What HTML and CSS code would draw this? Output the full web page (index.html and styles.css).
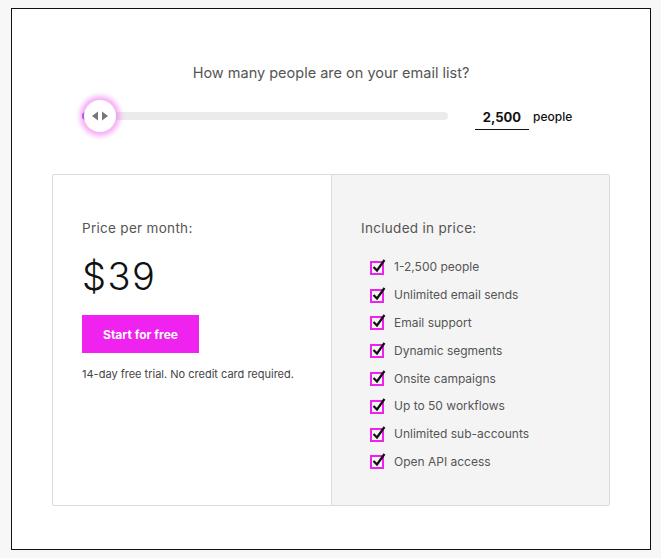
FILE: index.html
```html
<!DOCTYPE html>
<html lang="en">
<head>
    <meta charset="UTF-8">
    <title>Pricing</title>
    <link rel="stylesheet" href="styles.css">
</head>
<body>
    <div class="frame">
        <div class="question">How many people are on your email list?</div>
        <div class="slider-row">
            <div class="track">
                <div class="track-fill"></div>
                <div class="thumb">
                    <svg width="18" height="12" viewBox="0 0 18 12">
                        <path d="M1 6 L7 1.5 L7 10.5 Z" fill="#777"/>
                        <path d="M17 6 L11 1.5 L11 10.5 Z" fill="#777"/>
                    </svg>
                </div>
            </div>
            <div class="count">
                <span class="count-value">2,500</span>
                <span class="count-unit">people</span>
            </div>
        </div>

        <div class="card">
            <div class="price-side">
                <div class="label">Price per month:</div>
                <div class="price">$39</div>
                <button class="start-btn">Start for free</button>
                <div class="trial">14-day free trial. No credit card required.</div>
            </div>
            <div class="features-side">
                <div class="label">Included in price:</div>
                <ul class="features">
                    <li><svg class="check" viewBox="0 0 16 16"><rect x="1" y="3" width="12" height="12" fill="none" stroke="#ee22ee" stroke-width="2"/><path d="M3.5 8 L7 11.5 L14.5 1" fill="none" stroke="#111" stroke-width="2.2"/></svg>1-2,500 people</li>
                    <li><svg class="check" viewBox="0 0 16 16"><rect x="1" y="3" width="12" height="12" fill="none" stroke="#ee22ee" stroke-width="2"/><path d="M3.5 8 L7 11.5 L14.5 1" fill="none" stroke="#111" stroke-width="2.2"/></svg>Unlimited email sends</li>
                    <li><svg class="check" viewBox="0 0 16 16"><rect x="1" y="3" width="12" height="12" fill="none" stroke="#ee22ee" stroke-width="2"/><path d="M3.5 8 L7 11.5 L14.5 1" fill="none" stroke="#111" stroke-width="2.2"/></svg>Email support</li>
                    <li><svg class="check" viewBox="0 0 16 16"><rect x="1" y="3" width="12" height="12" fill="none" stroke="#ee22ee" stroke-width="2"/><path d="M3.5 8 L7 11.5 L14.5 1" fill="none" stroke="#111" stroke-width="2.2"/></svg>Dynamic segments</li>
                    <li><svg class="check" viewBox="0 0 16 16"><rect x="1" y="3" width="12" height="12" fill="none" stroke="#ee22ee" stroke-width="2"/><path d="M3.5 8 L7 11.5 L14.5 1" fill="none" stroke="#111" stroke-width="2.2"/></svg>Onsite campaigns</li>
                    <li><svg class="check" viewBox="0 0 16 16"><rect x="1" y="3" width="12" height="12" fill="none" stroke="#ee22ee" stroke-width="2"/><path d="M3.5 8 L7 11.5 L14.5 1" fill="none" stroke="#111" stroke-width="2.2"/></svg>Up to 50 workflows</li>
                    <li><svg class="check" viewBox="0 0 16 16"><rect x="1" y="3" width="12" height="12" fill="none" stroke="#ee22ee" stroke-width="2"/><path d="M3.5 8 L7 11.5 L14.5 1" fill="none" stroke="#111" stroke-width="2.2"/></svg>Unlimited sub-accounts</li>
                    <li><svg class="check" viewBox="0 0 16 16"><rect x="1" y="3" width="12" height="12" fill="none" stroke="#ee22ee" stroke-width="2"/><path d="M3.5 8 L7 11.5 L14.5 1" fill="none" stroke="#111" stroke-width="2.2"/></svg>Open API access</li>
                </ul>
            </div>
        </div>
    </div>
</body>
</html>
```

FILE: styles.css
```css
* {
    margin: 0;
    padding: 0;
    box-sizing: border-box;
}

body {
    background: #f7f7f7;
    font-family: "Inter", "Liberation Sans", sans-serif;
    color: #555;
}

.frame {
    margin: 8px 0 0 11px;
    width: 640px;
    height: 542px;
    background: #fff;
    border: 1px solid #111;
    padding: 55px 40px 0 40px;
}

.question {
    text-align: center;
    font-size: 14.5px;
    color: #555;
}

.slider-row {
    display: flex;
    align-items: center;
    margin-top: 21px;
    padding-left: 30px;
}

.track {
    position: relative;
    width: 366px;
    height: 8px;
    border-radius: 4px;
    background: #ebebeb;
}

.track-fill {
    width: 10px;
    height: 100%;
    border-radius: 4px 0 0 4px;
    background: #8a4fe0;
}

.thumb {
    position: absolute;
    left: 2px;
    top: -12px;
    width: 32px;
    height: 32px;
    border-radius: 50%;
    background: #fff;
    box-shadow: 0 0 5px 4px rgba(240, 90, 240, 0.5);
    display: flex;
    align-items: center;
    justify-content: center;
}

.count {
    display: flex;
    align-items: center;
    margin-left: 27px;
    gap: 4px;
}

.count-value {
    display: inline-block;
    width: 54px;
    text-align: center;
    font-size: 13px;
    font-weight: 700;
    color: #111;
    padding: 3px 0 4px;
    border-bottom: 1px solid #111;
    margin-top: 4px;
}

.count-unit {
    font-size: 12px;
    font-weight: 500;
    color: #111;
}

.card {
    display: flex;
    margin-top: 44px;
    width: 558px;
    height: 332px;
    border: 1px solid #dcdcdc;
    border-radius: 2px;
}

.price-side {
    width: 279px;
    padding: 45px 29px 0;
    border-right: 1px solid #dcdcdc;
}

.features-side {
    flex: 1;
    background: #f4f4f4;
    padding: 45px 29px 0;
}

.label {
    font-size: 13.5px;
    color: #555;
    letter-spacing: 0.3px;
}

.price {
    font-size: 38px;
    font-weight: 300;
    color: #111;
    margin-top: 17px;
    letter-spacing: 1.5px;
}

.start-btn {
    display: block;
    margin-top: 16px;
    width: 117px;
    height: 38px;
    border: none;
    background: #ef22ef;
    color: #fff;
    font-family: inherit;
    font-size: 12px;
    font-weight: 700;
}

.trial {
    margin-top: 14px;
    font-size: 11px;
    color: #444;
}

.features {
    list-style: none;
    margin-top: 17px;
    padding-left: 9px;
}

.features li {
    display: flex;
    align-items: center;
    height: 27.8px;
    font-size: 12px;
    color: #555;
}

.check {
    width: 16px;
    height: 16px;
    margin-right: 8px;
}
```
